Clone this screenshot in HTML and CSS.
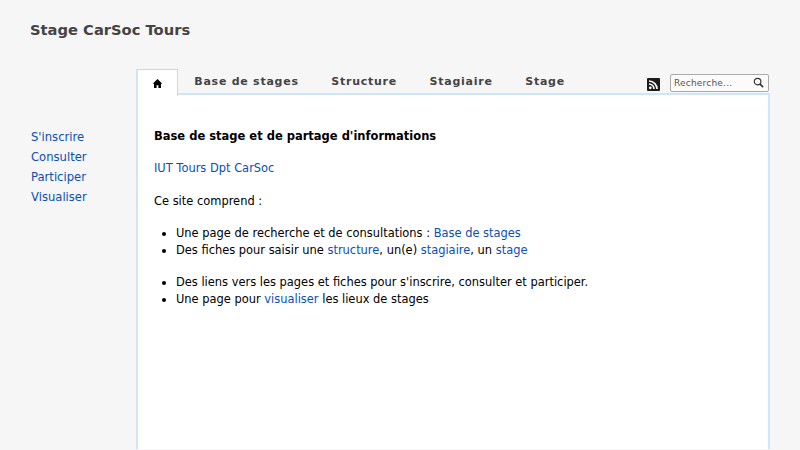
FILE: index.html
```html
<!DOCTYPE html>
<html lang="fr">
<head>
<meta charset="utf-8">
<title>Stage CarSoc Tours</title>
<link rel="stylesheet" href="styles.css">
</head>
<body>
<header class="site-header"><h1 class="site-title">Stage CarSoc Tours</h1></header>
<div class="layout">
  <nav class="side-nav">
    <a href="#">S'inscrire</a>
    <a href="#">Consulter</a>
    <a href="#">Participer</a>
    <a href="#">Visualiser</a>
  </nav>
  <div class="main-col">
    <div class="tabbar">
      <a class="tab tab-home" href="#" aria-label="Accueil">
        <svg viewBox="0 0 12 12" width="11" height="11"><path d="M6 1 L0.8 6.2 L2.2 6.2 L2.2 11 L5 11 L5 8 L7 8 L7 11 L9.8 11 L9.8 6.2 L11.2 6.2 Z" fill="#000"/></svg>
      </a>
      <a class="tab" href="#">Base de stages</a>
      <a class="tab" href="#">Structure</a>
      <a class="tab" href="#">Stagiaire</a>
      <a class="tab" href="#">Stage</a>
      <div class="tools">
        <svg class="rss" viewBox="0 0 13 13" width="13" height="13">
          <rect width="13" height="13" rx="1" fill="#1c1c1c"/>
          <circle cx="3.3" cy="9.8" r="1.4" fill="#fff"/>
          <path d="M2 6 A5 5 0 0 1 7 11 M2 3 A8 8 0 0 1 10 11" fill="none" stroke="#fff" stroke-width="1.6"/>
        </svg>
        <div class="search">
          <span class="search-text">Recherche...</span>
          <svg viewBox="0 0 12 12" width="11" height="11"><circle cx="5" cy="5" r="3.6" fill="none" stroke="#333" stroke-width="1.3"/><path d="M7.7 7.7 L11 11" stroke="#333" stroke-width="1.8"/></svg>
        </div>
      </div>
    </div>
    <main class="content">
      <p class="lead">Base de stage et de partage d'informations</p>
      <p><a href="#">IUT Tours Dpt CarSoc</a></p>
      <p>Ce site comprend :</p>
      <ul>
        <li>Une page de recherche et de consultations : <a href="#">Base de stages</a></li>
        <li>Des fiches pour saisir une <a href="#">structure</a>, un(e) <a href="#">stagiaire</a>, un <a href="#">stage</a></li>
      </ul>
      <ul>
        <li>Des liens vers les pages et fiches pour s'inscrire, consulter et participer.</li>
        <li>Une page pour <a href="#">visualiser</a> les lieux de stages</li>
      </ul>
    </main>
  </div>
</div>
</body>
</html>
```
FILE: styles.css
```css
html, body { margin: 0; height: 450px; overflow: hidden; }
body { background: #f6f6f6; font-family: "DejaVu Sans", sans-serif; font-size: 11.45px; color: #000; }
a { color: #0b4fb4; text-decoration: none; }
.site-header { padding: 21px 30px 0; height: 48px; box-sizing: border-box; }
.site-title { margin: 0; font-size: 14.7px; line-height: 18px; font-weight: bold; color: #444; }
.layout { display: flex; padding-top: 21px; }
.side-nav { width: 136px; flex: none; box-sizing: border-box; padding: 58px 0 0 31px; display: flex; flex-direction: column; font-size: 11.6px; }
.side-nav a { line-height: 20px; }
.main-col { width: 634px; flex: none; }
.tabbar { display: flex; align-items: center; height: 25px; position: relative; z-index: 1; margin-bottom: -1px; }
.tab { font-weight: bold; font-size: 11px; letter-spacing: 0.75px; color: #444; padding: 0 16.3px; line-height: 25px; }
.tab-home { display: flex; align-items: center; justify-content: center; box-sizing: border-box; width: 42px; height: 27px; padding: 0; background: #fff; border: 1px solid #bcdcf5; border-left: 2px solid #cfe5f8; border-bottom: 0; align-self: flex-start; }
.tools { margin-left: auto; margin-right: 1px; display: flex; align-items: center; gap: 10px; padding-top: 2px; }
.rss { display: block; margin-top: 3px; }
.search { box-sizing: border-box; width: 99px; height: 18px; background: #fbfbfb; border: 1px solid #aaa; border-radius: 2px; display: flex; align-items: center; justify-content: space-between; padding: 0 4px 0 3px; }
.search-text { font-size: 9px; color: #555; letter-spacing: .2px; padding-top: 1px; }
.content { box-sizing: border-box; height: 356px; background: #fff; border: 2px solid #cfe5f8; border-bottom: 0; padding: 33px 16px 0; line-height: 17px; }
.content p { margin: 0 0 15.4px; }
.content .lead { font-weight: bold; font-size: 11.5px; }
.content ul { margin: 0 0 15px; padding-left: 22px; }
```
